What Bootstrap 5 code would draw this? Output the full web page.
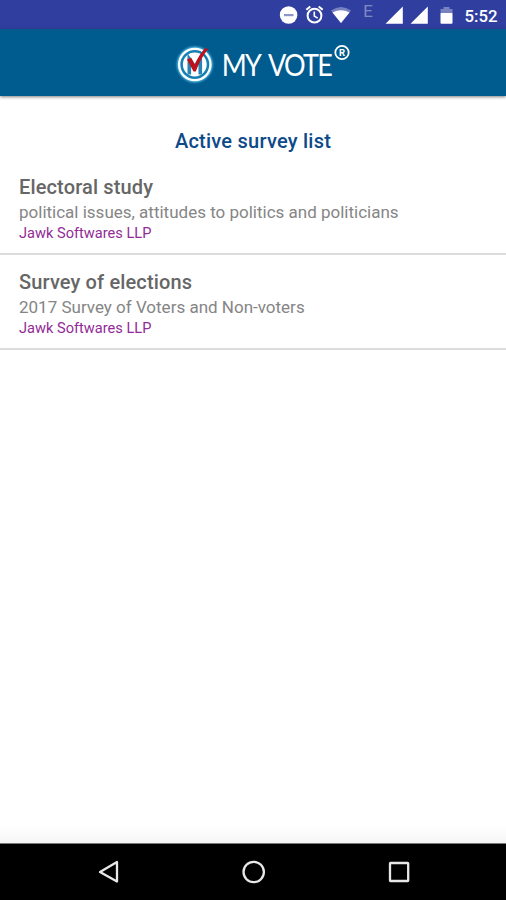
<!DOCTYPE html>
<html lang="en">
<head>
<meta charset="utf-8">
<meta name="viewport" content="width=device-width, initial-scale=1">
<title>My Vote</title>
<link href="https://cdn.jsdelivr.net/npm/bootstrap@5.3.0/dist/css/bootstrap.min.css" rel="stylesheet">
<style>
body{font-family:Roboto,sans-serif;background:#fff}
.status-bar{height:29px;background:#303f9f}
.app-bar{height:67px;background:#005b8f;box-shadow:0 1px 3px rgba(0,0,0,.5)}
.page-title{font-size:20px;line-height:24px;font-weight:500;color:#0d4a89;margin-top:33px;margin-bottom:22px;letter-spacing:.24px}
.survey{height:95px;border-bottom:2px solid #dcdcdc;padding:15px 19px 0}
.survey:first-child{height:80px;padding-top:0}
.survey-name{font-size:20px;line-height:24px;font-weight:500;color:#666;margin:0 0 2px;letter-spacing:.14px}
.survey-info{font-size:17px;line-height:22px;font-weight:400;color:#858585;margin:0 0 1px}
.survey-org{font-size:14.600px;line-height:18px;font-weight:400;color:#912b96;margin:0}
.fade-edge{height:17px;background:linear-gradient(#fff,#f5f5f5)}
.nav-keys{height:57px;background:#000;border-top:1px solid #777}
.wordmark{font-family:Lato,sans-serif;font-size:30px;word-spacing:5px}
</style>
<script src="https://cdn.jsdelivr.net/npm/bootstrap@5.3.0/dist/js/bootstrap.bundle.min.js"></script>
</head>
<body class="vh-100 d-flex flex-column overflow-hidden">
<div class="status-bar flex-shrink-0">
<svg class="d-block" width="506" height="29" viewBox="0 0 506 29" fill="#fff">
<circle cx="288.600" cy="15" r="8.800"/><rect x="284" y="14" width="9.500" height="2.200" fill="#8d94cc"/>
<g fill="none" stroke="#fff"><circle cx="314.500" cy="15.700" r="6.900" stroke-width="2"/><path d="M306.300 9.800l4-3.300M322.700 9.800l-4-3.300" stroke-width="2"/><path d="M314.300 11.500v4.600l3.400 2" stroke-width="1.600"/></g>
<path d="M331 10.500Q341 3.500 351 10.500L341 23z" opacity=".35"/><path d="M332.500 12.500Q341 8 349.500 12.500L341 23z"/>
<text x="363.300" y="16.500" font-size="17" opacity=".38" font-family="Roboto">E</text>
<path d="M402.800 6.500v17.200h-17.300zM427.800 6.500v17.200h-17.300z"/>
<path d="M440.500 9h3V7h6v2h3v5h-12z" opacity=".35"/><rect x="440.500" y="13" width="12" height="10.700" rx="1"/>
<text x="464.500" y="22" font-size="17" font-weight="500" font-family="Roboto" textLength="33" lengthAdjust="spacingAndGlyphs">5:52</text>
</svg>
</div>
<header class="app-bar flex-shrink-0 d-flex justify-content-center">
<svg class="d-block" width="200" height="67" viewBox="153 29 200 67">
<defs><filter id="glow" x="-30%" y="-30%" width="160%" height="160%"><feGaussianBlur stdDeviation="1.300"/></filter></defs>
<circle cx="194.800" cy="64.500" r="17.800" fill="#55c5ee" filter="url(#glow)"/>
<circle cx="194.800" cy="64.500" r="16.800" fill="#fff"/>
<circle cx="194.800" cy="64.500" r="13.200" fill="#fff" stroke="#1680b4" stroke-width="2.600"/>
<path d="M189.300 74.500V59l5.500 8 5.500-8v15.500" fill="none" stroke="#2583b5" stroke-width="3.600"/>
<path d="M187 59.500l4.200-1.800 3.600 6.800Q199 54.500 205.500 47.800l2.600 1.400Q200.500 58 195.800 71.500h-2.300z" fill="#bd111b"/>
<text class="wordmark" transform="translate(221.700 75.500) scale(.9 1)" fill="#fff" textLength="123.500" lengthAdjust="spacing">MY VOTE</text>
<circle cx="342" cy="52.500" r="6.700" fill="none" stroke="#fff" stroke-width="1.800"/>
<text x="342.100" y="56" font-size="9.500" font-weight="700" fill="#fff" font-family="Roboto" text-anchor="middle">R</text>
</svg>
</header>
<main class="flex-grow-1 d-flex flex-column">
<h1 class="page-title text-center">Active survey list</h1>
<div class="flex-grow-1">
<article class="survey"><h2 class="survey-name">Electoral study</h2><p class="survey-info">political issues, attitudes to politics and politicians</p><p class="survey-org">Jawk Softwares LLP</p></article>
<article class="survey"><h2 class="survey-name">Survey of elections</h2><p class="survey-info">2017 Survey of Voters and Non-voters</p><p class="survey-org">Jawk Softwares LLP</p></article>
</div>
<div class="fade-edge"></div>
</main>
<footer class="nav-keys flex-shrink-0">
<svg class="d-block" width="506" height="56" viewBox="0 844 506 56" fill="none" stroke="#e8e8e8" stroke-width="2.300">
<path d="M117 862v19.500L100 872z" stroke-linejoin="round"/><circle cx="253.700" cy="872" r="10.200"/><rect x="390" y="863" width="18.200" height="18" rx=".5"/>
</svg>
</footer>
</body>
</html>
